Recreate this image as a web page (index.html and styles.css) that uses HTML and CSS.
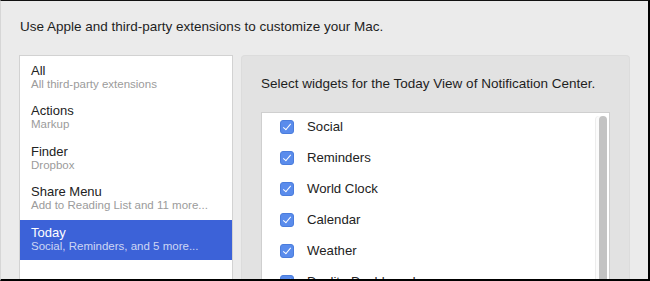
FILE: index.html
```html
<!DOCTYPE html>
<html lang="en">
<head>
    <meta charset="UTF-8">
    <title>Extensions</title>
    <link rel="stylesheet" href="styles.css">
</head>
<body>
    <div class="window">
        <p class="intro">Use Apple and third-party extensions to customize your Mac.</p>
        <div class="main">
            <ul class="sources">
                <li class="source">
                    <span class="source-name">All</span>
                    <span class="source-detail">All third-party extensions</span>
                </li>
                <li class="source">
                    <span class="source-name">Actions</span>
                    <span class="source-detail">Markup</span>
                </li>
                <li class="source">
                    <span class="source-name">Finder</span>
                    <span class="source-detail">Dropbox</span>
                </li>
                <li class="source">
                    <span class="source-name">Share Menu</span>
                    <span class="source-detail">Add to Reading List and 11 more...</span>
                </li>
                <li class="source selected">
                    <span class="source-name">Today</span>
                    <span class="source-detail">Social, Reminders, and 5 more...</span>
                </li>
            </ul>
            <div class="pane">
                <p class="pane-title">Select widgets for the Today View of Notification Center.</p>
                <div class="widgets">
                    <label class="widget"><span class="check"></span>Social</label>
                    <label class="widget"><span class="check"></span>Reminders</label>
                    <label class="widget"><span class="check"></span>World Clock</label>
                    <label class="widget"><span class="check"></span>Calendar</label>
                    <label class="widget"><span class="check"></span>Weather</label>
                    <label class="widget"><span class="check"></span>Daylite Dashboard</label>
                    <div class="scroll-thumb"></div>
                </div>
            </div>
        </div>
    </div>
</body>
</html>
```

FILE: styles.css
```css
html, body {
    margin: 0;
    padding: 0;
    background: #000;
}
.window {
    width: 650px;
    height: 281px;
    box-sizing: border-box;
    overflow: hidden;
    background-color: #ebebeb;
    border-top: 1px solid #111;
    border-right: 2px solid #000;
    border-bottom: 2px solid #000;
    border-left: 1px solid #d6d6d6;
    padding: 18px 18px 0 18px;
    font-family: "Liberation Sans", Arial, sans-serif;
    color: #222;
}
.intro {
    margin: 0 0 20px 1px;
    font-size: 13.5px;
    line-height: 16px;
    color: #1e1e1e;
}
.main {
    display: flex;
    gap: 8px;
    height: 240px;
}
.sources {
    list-style: none;
    margin: 0;
    padding: 1.5px 0 0 0;
    width: 214px;
    box-sizing: border-box;
    background-color: #fff;
    border: 1px solid #d2d2d2;
    border-bottom: none;
}
.source {
    display: flex;
    flex-direction: column;
    height: 40.5px;
    box-sizing: border-box;
    padding: 5px 0 0 11px;
}
.source-name {
    font-size: 13px;
    line-height: 15px;
    color: #222;
}
.source-detail {
    font-size: 11.5px;
    line-height: 13px;
    color: #9b9b9b;
}
.source.selected {
    background-color: #3c62d8;
}
.source.selected .source-name {
    color: #fff;
}
.source.selected .source-detail {
    color: #cdd6f4;
}
.pane {
    flex: 1;
    background-color: #e2e2e2;
    border: 1px solid #dcdcdc;
    border-bottom: none;
    border-radius: 4px 4px 0 0;
    padding: 20px 19px 0 19px;
}
.pane-title {
    margin: 0 0 20px 0;
    font-size: 13.5px;
    line-height: 16px;
    color: #1e1e1e;
}
.widgets {
    position: relative;
    height: 200px;
    background-color: #fff;
    border: 1px solid #cfcfcf;
    border-bottom: none;
    padding-top: 6px;
}
.widget {
    display: flex;
    align-items: flex-start;
    gap: 13px;
    height: 31px;
    padding-left: 18px;
    font-size: 13.2px;
    line-height: 16px;
    color: #222;
}
.check {
    position: relative;
    width: 14px;
    height: 14px;
    margin-top: 1px;
    box-sizing: border-box;
    border-radius: 3px;
    background-color: #5a8cec;
    border: 1px solid #4b7ddc;
}
.check:after {
    content: "";
    position: absolute;
    left: 4px;
    top: 1px;
    width: 3px;
    height: 7px;
    border-right: 1.5px solid #fff;
    border-bottom: 1.5px solid #fff;
    transform: rotate(40deg);
}
.scroll-thumb {
    position: absolute;
    top: 3px;
    right: 2px;
    width: 8px;
    height: 220px;
    border-radius: 4px;
    background-color: #c3c3c3;
    box-shadow: -3px 0 0 #fbfbfb, -4px 0 0 #ececec;
}
```
